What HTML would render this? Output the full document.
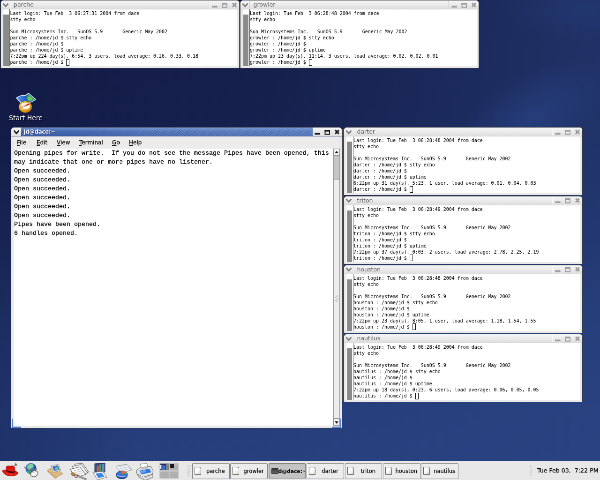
<!DOCTYPE html><html><head><meta charset="utf-8"><title>desktop</title><style>

html,body{margin:0;padding:0;}
body{width:600px;height:480px;overflow:hidden;background:#1d2c60;position:relative;}
#stage{will-change:transform;position:absolute;left:0;top:0;width:1280px;height:1024px;transform:scale(0.46875);transform-origin:0 0;overflow:hidden;
 font-family:"DejaVu Sans","Liberation Sans",sans-serif;}
#bg{position:absolute;left:0;top:0;width:1280px;height:1024px;}
.win{position:absolute;box-sizing:border-box;border:1px solid #3a3b42;border-radius:7px 7px 2px 2px;background:#e9e9e9;overflow:hidden;}
.tb{position:absolute;left:0;right:0;top:0;height:18px;background:linear-gradient(#f6f6f6,#ededed 45%,#dedede);border-bottom:1px solid #c4c4c4;}
.tb .ttl{position:absolute;left:27.5px;top:1px;font-size:12.5px;line-height:16px;color:#636363;white-space:pre;}
.tb .sepl{position:absolute;left:19px;top:1px;width:1px;height:16px;background:#cfcfcf;border-right:1px solid #fbfbfb;}
.tb .sepr{position:absolute;right:63px;top:1px;width:1px;height:16px;background:#cfcfcf;border-right:1px solid #fbfbfb;}
.tb svg{position:absolute;top:0.8px;}
.xt{position:absolute;left:4.5px;top:19px;width:499px;height:121px;background:#fff;}
.xt .sb{position:absolute;left:0;top:0;width:14px;height:121px;background:#fff;border-right:1px solid #4a4a4a;}
.xt .sb i{position:absolute;left:1px;top:11px;width:11.5px;bottom:0;background:#8b8b8b;}
.xt pre{position:absolute;left:15.5px;top:2.3px;margin:0;font-family:"DejaVu Sans Mono","Liberation Mono",monospace;font-size:9.967px;line-height:13px;color:#000;letter-spacing:0;-webkit-text-stroke:0.05px #000;}
.xt pre b{font-weight:normal;display:inline-block;width:7px;height:14px;border:1.2px solid #000;box-sizing:border-box;vertical-align:top;margin:-0.5px 0 -3px 0;}
.mw{border-radius:7px 7px 2px 2px;}
.mw .tb{background:linear-gradient(90deg,rgba(60,92,165,0) 0,rgba(60,92,165,0) 25%,rgba(120,160,225,.22) 100%),linear-gradient(#6f92cf,#4468b0 45%,#3b5ea6);border-bottom:1px solid #2d4a86;}
.mw .tb .ttl{color:#fff;font-weight:bold;left:26.5px;font-size:11.6px;letter-spacing:-0.2px;text-shadow:1px 1px 0 #24386e;}
.mw .strp{position:absolute;left:120px;right:62px;top:0;height:18px;background:repeating-linear-gradient(135deg,rgba(255,255,255,0) 0 2px,rgba(255,255,255,.16) 2px 4px);-webkit-mask-image:linear-gradient(90deg,transparent,#000 35%);mask-image:linear-gradient(90deg,transparent,#000 35%);}
.mw .grip{position:absolute;background:#5a82cc;}
.mw .mbtn{position:absolute;left:0;top:0;width:21px;height:18px;background:linear-gradient(#f6f6f6,#e0e0e0);}
.mw .rbtn{position:absolute;right:0;top:0;width:62px;height:18px;background:linear-gradient(#f6f6f6,#e0e0e0);}
.menubar{position:absolute;left:5px;right:5px;top:19px;height:26px;background:#ececec;border-bottom:1px solid #d0d0d0;font-size:12px;color:#000;-webkit-text-stroke:0.25px #000;}
.menubar span{position:absolute;top:5px;line-height:16px;white-space:pre;}
.menubar u{text-decoration:underline;text-decoration-thickness:1.3px;text-underline-offset:1.5px;}
.term{position:absolute;left:5px;top:45px;width:681px;height:591px;background:#fff;}
.term pre{position:absolute;left:1px;top:0.2px;margin:0;font-family:"Liberation Mono",monospace;font-size:13.333px;line-height:19px;color:#000;-webkit-text-stroke:0.3px #000;}
.vsb{position:absolute;left:687px;top:45px;width:14px;height:591px;background:#c6c6c6;box-sizing:border-box;border:1px solid #9a9a9a;}
.vsb .up,.vsb .dn{position:absolute;left:-1px;width:14px;height:15px;background:#f2f2f2;border:1px solid #8c8c8c;box-sizing:border-box;}
.vsb .up{top:-1px;}
.vsb .dn{bottom:-1px;}
.vsb .sl{position:absolute;left:-1px;width:14px;top:63.5px;bottom:14px;background:#ededed;border:1px solid #9a9a9a;box-sizing:border-box;}
.vsb svg{position:absolute;left:2px;top:3px;}
#panel{position:absolute;left:0;top:983px;width:1280px;height:41px;background:#e8e8e8;border-top:1px solid #f8f8f8;box-sizing:border-box;}
.task{position:absolute;top:3.5px;height:34px;width:79.5px;box-sizing:border-box;border:1px solid #7a7a7a;border-radius:2px;background:#ececec;box-shadow:inset 1px 1px 0 #fff;font-size:11.5px;color:#000;-webkit-text-stroke:0.25px #000;}
.task.act{background:#c4c4c4;box-shadow:inset 1px 1px 1px #9a9a9a;}
.task span{position:absolute;left:22px;right:2px;top:9px;text-align:center;line-height:15px;white-space:pre;}
.task i{position:absolute;left:4px;top:7px;width:14px;height:17px;box-sizing:border-box;border:1px solid #5a5a5a;background:linear-gradient(135deg,#fff 40%,#d8d8d0);border-radius:1px 4px 1px 1px;}
.task.act i{left:5px;top:10px;width:15px;height:12px;background:linear-gradient(#3a3a3a,#6a6a6a);border-color:#2a2a2a;border-radius:1px;z-index:2;}
.task.act span{left:16px;right:0;text-align:left;font-weight:bold;font-size:11px;overflow:hidden;-webkit-text-stroke:0;letter-spacing:-0.15px;}
#clock{position:absolute;left:1146px;top:12px;font-size:12.6px;line-height:15px;color:#000;white-space:pre;-webkit-text-stroke:0.25px #000;}
.hdl{position:absolute;top:8px;width:5px;height:26px;background:repeating-linear-gradient(135deg,#c8c8c8 0 1.5px,transparent 1.5px 4px);}
.ws{position:absolute;background:#b3b3b3;}
#starthere{position:absolute;left:0;top:243px;width:110px;text-align:center;color:#fff;font-size:14px;line-height:16px;text-shadow:1px 1px 1px #000;}

</style></head><body><div id="stage">
<svg id="bg" width="1280" height="1024" viewBox="0 0 1280 1024" preserveAspectRatio="none">
<defs>
<linearGradient id="g1" x1="0" y1="0" x2="0" y2="1">
<stop offset="0" stop-color="#131b44"/><stop offset="0.27" stop-color="#151e4a"/><stop offset="0.5" stop-color="#1b2a5c"/><stop offset="0.68" stop-color="#223770"/><stop offset="0.85" stop-color="#263d7a"/><stop offset="1" stop-color="#27407e"/>
</linearGradient>
<linearGradient id="g2" x1="0" y1="0" x2="1" y2="0">
<stop offset="0" stop-color="#2c4888" stop-opacity="0"/><stop offset="0.45" stop-color="#2c4888" stop-opacity="0.08"/><stop offset="1" stop-color="#2c4888" stop-opacity="0.5"/>
</linearGradient>
<radialGradient id="g3"><stop offset="0" stop-color="#2a4486" stop-opacity="0.7"/><stop offset="1" stop-color="#2a4486" stop-opacity="0"/></radialGradient>
<linearGradient id="g4" x1="0" y1="0" x2="1" y2="0"><stop offset="0" stop-color="#101840" stop-opacity="0.3"/><stop offset="1" stop-color="#101840" stop-opacity="0"/></linearGradient>
</defs>
<rect width="1280" height="1024" fill="url(#g1)"/>
<rect width="1280" height="1024" fill="url(#g2)"/>
<rect width="300" height="1024" fill="url(#g4)"/>
<ellipse cx="1135" cy="255" rx="190" ry="95" fill="url(#g3)" transform="rotate(-32 1135 255)"/>
<ellipse cx="1240" cy="20" rx="170" ry="70" fill="url(#g3)" opacity="0.45"/>
</svg>
<svg style="position:absolute;left:30px;top:193px" width="48" height="50" viewBox="0 0 48 50" ><defs><linearGradient id="shm" x1="0" y1="0" x2="1" y2="0"><stop offset="0" stop-color="#5aa0f0"/><stop offset="0.55" stop-color="#1c56c0"/><stop offset="1" stop-color="#2a62c4"/></linearGradient><radialGradient id="shc" cx="0.4" cy="0.35" r="0.7"><stop offset="0" stop-color="#ffe890"/><stop offset="0.6" stop-color="#f0b020"/><stop offset="1" stop-color="#b87408"/></radialGradient></defs><path d="M5 16 Q14 9 24 11 Q29 7 31 6 L46 19 Q40 24 32 26 Q22 24 18 30 Z" fill="url(#shm)" stroke="#e8eef8" stroke-width="1.6" stroke-linejoin="round"/><path d="M26 17 Q29 10 31.5 8 L44 19 Q38 23 32 24 Z" fill="#3fae4c"/><path d="M28 17 L34 12 L40 19 L33 23 Z" fill="#7fd070" opacity="0.7"/><ellipse cx="24" cy="35" rx="14" ry="12.5" fill="url(#shc)" stroke="#8a5a06" stroke-width="0.8"/><ellipse cx="24" cy="33" rx="10.5" ry="8" fill="#fbf6e6" stroke="#c08a18" stroke-width="0.8"/><path d="M16 36 L32 29" stroke="#d02818" stroke-width="2.6" stroke-linecap="round"/><path d="M16 36 L24 32.5" stroke="#f0f0f0" stroke-width="1.6" stroke-linecap="round"/></svg>
<div id="starthere">Start Here</div>
<div class="win" style="left:0.5px;top:0px;width:510px;height:146px"><div class="tb"><svg style="left:3px" width="14" height="18" viewBox="0 0 14 18"><path d="M1.5 5.5 L7 11.5 L12.5 5.5" fill="none" stroke="#7c7c7c" stroke-width="3"/></svg><div class="sepl"></div><div class="ttl">parche</div><div class="sepr"></div><svg style="right:0px" width="62" height="18" viewBox="0 0 62 18"><rect x="4.5" y="10.5" width="11" height="3.6" fill="#9c9c9c"/><rect x="26.5" y="5" width="9.5" height="8.6" fill="none" stroke="#9c9c9c" stroke-width="2"/><rect x="25.5" y="4" width="11.5" height="3.6" fill="#9c9c9c"/><path d="M48 4.5 L56 12.5 M56 4.5 L48 12.5" stroke="#9c9c9c" stroke-width="3.2"/></svg></div><div class="xt"><div class="sb"><i></i></div><pre>Last login: Tue Feb  3 06:27:31 2004 from dace
stty echo

Sun Microsystems Inc.   SunOS 5.9       Generic May 2002
parche : /home/jd $ stty echo
parche : /home/jd $
parche : /home/jd $ uptime
7:22pm up 224 day(s), 6:54, 3 users, load average: 0.26, 0.33, 0.18
parche : /home/jd $ <b></b></pre></div></div>
<div class="win" style="left:512px;top:0px;width:510px;height:146px"><div class="tb"><svg style="left:3px" width="14" height="18" viewBox="0 0 14 18"><path d="M1.5 5.5 L7 11.5 L12.5 5.5" fill="none" stroke="#7c7c7c" stroke-width="3"/></svg><div class="sepl"></div><div class="ttl">growler</div><div class="sepr"></div><svg style="right:0px" width="62" height="18" viewBox="0 0 62 18"><rect x="4.5" y="10.5" width="11" height="3.6" fill="#9c9c9c"/><rect x="26.5" y="5" width="9.5" height="8.6" fill="none" stroke="#9c9c9c" stroke-width="2"/><rect x="25.5" y="4" width="11.5" height="3.6" fill="#9c9c9c"/><path d="M48 4.5 L56 12.5 M56 4.5 L48 12.5" stroke="#9c9c9c" stroke-width="3.2"/></svg></div><div class="xt"><div class="sb"><i></i></div><pre>Last login: Tue Feb  3 06:28:48 2004 from dace
stty echo

Sun Microsystems Inc.   SunOS 5.9       Generic May 2002
growler : /home/jd $ stty echo
growler : /home/jd $
growler : /home/jd $ uptime
7:22pm up 23 day(s), 11:14, 3 users, load average: 0.02, 0.02, 0.01
growler : /home/jd $ <b></b></pre></div></div>
<div class="win" style="left:733px;top:271px;width:510px;height:146px"><div class="tb"><svg style="left:3px" width="14" height="18" viewBox="0 0 14 18"><path d="M1.5 5.5 L7 11.5 L12.5 5.5" fill="none" stroke="#7c7c7c" stroke-width="3"/></svg><div class="sepl"></div><div class="ttl">darter</div><div class="sepr"></div><svg style="right:0px" width="62" height="18" viewBox="0 0 62 18"><rect x="4.5" y="10.5" width="11" height="3.6" fill="#9c9c9c"/><rect x="26.5" y="5" width="9.5" height="8.6" fill="none" stroke="#9c9c9c" stroke-width="2"/><rect x="25.5" y="4" width="11.5" height="3.6" fill="#9c9c9c"/><path d="M48 4.5 L56 12.5 M56 4.5 L48 12.5" stroke="#9c9c9c" stroke-width="3.2"/></svg></div><div class="xt"><div class="sb"><i></i></div><pre>Last login: Tue Feb  3 06:28:48 2004 from dace
stty echo

Sun Microsystems Inc.   SunOS 5.9       Generic May 2002
darter : /home/jd $ stty echo
darter : /home/jd $
darter : /home/jd $ uptime
6:22pm up 31 day(s), 5:23, 1 user, load average: 0.01, 0.04, 0.03
darter : /home/jd $ <b></b></pre></div></div>
<div class="win" style="left:733px;top:417.5px;width:510px;height:146px"><div class="tb"><svg style="left:3px" width="14" height="18" viewBox="0 0 14 18"><path d="M1.5 5.5 L7 11.5 L12.5 5.5" fill="none" stroke="#7c7c7c" stroke-width="3"/></svg><div class="sepl"></div><div class="ttl">triton</div><div class="sepr"></div><svg style="right:0px" width="62" height="18" viewBox="0 0 62 18"><rect x="4.5" y="10.5" width="11" height="3.6" fill="#9c9c9c"/><rect x="26.5" y="5" width="9.5" height="8.6" fill="none" stroke="#9c9c9c" stroke-width="2"/><rect x="25.5" y="4" width="11.5" height="3.6" fill="#9c9c9c"/><path d="M48 4.5 L56 12.5 M56 4.5 L48 12.5" stroke="#9c9c9c" stroke-width="3.2"/></svg></div><div class="xt"><div class="sb"><i></i></div><pre>Last login: Tue Feb  3 06:28:49 2004 from dace
stty echo

Sun Microsystems Inc.   SunOS 5.9       Generic May 2002
triton : /home/jd $ stty echo
triton : /home/jd $
triton : /home/jd $ uptime
7:22pm up 37 day(s), 0:03, 2 users, load average: 2.78, 2.25, 2.19
triton : /home/jd $ <b></b></pre></div></div>
<div class="win" style="left:733px;top:564.5px;width:510px;height:146px"><div class="tb"><svg style="left:3px" width="14" height="18" viewBox="0 0 14 18"><path d="M1.5 5.5 L7 11.5 L12.5 5.5" fill="none" stroke="#7c7c7c" stroke-width="3"/></svg><div class="sepl"></div><div class="ttl">houston</div><div class="sepr"></div><svg style="right:0px" width="62" height="18" viewBox="0 0 62 18"><rect x="4.5" y="10.5" width="11" height="3.6" fill="#9c9c9c"/><rect x="26.5" y="5" width="9.5" height="8.6" fill="none" stroke="#9c9c9c" stroke-width="2"/><rect x="25.5" y="4" width="11.5" height="3.6" fill="#9c9c9c"/><path d="M48 4.5 L56 12.5 M56 4.5 L48 12.5" stroke="#9c9c9c" stroke-width="3.2"/></svg></div><div class="xt"><div class="sb"><i></i></div><pre>Last login: Tue Feb  3 06:28:48 2004 from dace
stty echo

Sun Microsystems Inc.   SunOS 5.9       Generic May 2002
houston : /home/jd $ stty echo
houston : /home/jd $
houston : /home/jd $ uptime
7:22pm up 23 day(s), 8:05, 1 user, load average: 1.18, 1.54, 1.55
houston : /home/jd $ <b></b></pre></div></div>
<div class="win" style="left:733px;top:712px;width:510px;height:146px"><div class="tb"><svg style="left:3px" width="14" height="18" viewBox="0 0 14 18"><path d="M1.5 5.5 L7 11.5 L12.5 5.5" fill="none" stroke="#7c7c7c" stroke-width="3"/></svg><div class="sepl"></div><div class="ttl">nautilus</div><div class="sepr"></div><svg style="right:0px" width="62" height="18" viewBox="0 0 62 18"><rect x="4.5" y="10.5" width="11" height="3.6" fill="#9c9c9c"/><rect x="26.5" y="5" width="9.5" height="8.6" fill="none" stroke="#9c9c9c" stroke-width="2"/><rect x="25.5" y="4" width="11.5" height="3.6" fill="#9c9c9c"/><path d="M48 4.5 L56 12.5 M56 4.5 L48 12.5" stroke="#9c9c9c" stroke-width="3.2"/></svg></div><div class="xt"><div class="sb"><i></i></div><pre>Last login: Tue Feb  3 06:28:49 2004 from dace
stty echo

Sun Microsystems Inc.   SunOS 5.9       Generic May 2002
nautilus : /home/jd $ stty echo
nautilus : /home/jd $
nautilus : /home/jd $ uptime
7:22pm up 18 day(s), 0:23, 6 users, load average: 0.06, 0.05, 0.05
nautilus : /home/jd $ <b></b></pre></div></div>
<div style="position:absolute;left:729.5px;top:275px;width:4px;height:580px;background:#474747"></div><div style="position:absolute;left:510px;top:5px;width:2.5px;height:139px;background:#4c4c4c"></div>
<div class="win mw" style="left:23px;top:271px;width:707px;height:643px"><div class="tb"><div class="strp"></div><div class="mbtn"></div><svg style="left:4px" width="14" height="18" viewBox="0 0 14 18"><path d="M1.5 5.5 L7 11.5 L12.5 5.5" fill="none" stroke="#1a1a1a" stroke-width="3"/></svg><div class="ttl">jd@dace:~</div><div class="rbtn"></div><svg style="right:0px" width="62" height="18" viewBox="0 0 62 18"><rect x="4.5" y="10.5" width="11" height="3.6" fill="#1a1a1a"/><rect x="26.5" y="5" width="9.5" height="8.6" fill="none" stroke="#1a1a1a" stroke-width="2"/><rect x="25.5" y="4" width="11.5" height="3.6" fill="#1a1a1a"/><path d="M48 4.5 L56 12.5 M56 4.5 L48 12.5" stroke="#1a1a1a" stroke-width="3.2"/></svg></div><div class="menubar"><span style="left:7px"><u>F</u>ile</span><span style="left:49px"><u>E</u>dit</span><span style="left:92px"><u>V</u>iew</span><span style="left:140px"><u>T</u>erminal</span><span style="left:210px"><u>G</u>o</span><span style="left:246px"><u>H</u>elp</span></div><div class="term"><pre>Opening pipes for write.  If you do not see the message Pipes have been opened, this
may indicate that one or more pipes have no listener.
Open succeeded.
Open succeeded.
Open succeeded.
Open succeeded.
Open succeeded.
Open succeeded.
Pipes have been opened.
6 handles opened.</pre></div><div class="vsb"><div class="sl"><div style="position:absolute;left:3px;top:50%;margin-top:-8px;width:7px;height:16px;background:repeating-linear-gradient(135deg,#bdbdbd 0 1.4px,transparent 1.4px 4px)"></div></div><div class="up"><svg width="8" height="8"><path d="M0 6 L4 1 L8 6Z" fill="#111"/></svg></div><div class="dn"><svg width="8" height="8"><path d="M0 2 L4 7 L8 2Z" fill="#111"/></svg></div></div><div class="grip" style="left:1px;bottom:0;width:3px;height:20px"></div><div class="grip" style="left:1px;bottom:0;width:20px;height:3px"></div><div class="grip" style="right:1px;bottom:0;width:3px;height:20px"></div><div class="grip" style="right:1px;bottom:0;width:20px;height:3px"></div></div>
<div id="panel"><svg style="position:absolute;left:0px;top:0px" width="48" height="42" viewBox="0 0 48 42" overflow="visible"><path d="M29.9 9.3 L37.3 9.3 L33.6 3.6 Z" fill="#5e5e5e"/><path d="M4.9 20.4 Q7 17.5 13.5 18.5 L13 12.5 Q14 9.6 18 9.8 Q22 11 25 9.8 Q30 9.2 31 12.5 L32 21 Q37 22 38.5 24.5 Q38 28 32 30.5 Q24 33 16 30.5 Q7 27 4.9 20.4 Z" fill="#e8150f" stroke="#8a1408" stroke-width="0.9"/><path d="M13.5 18.7 Q22 23.5 32 21.2 L32.3 23.6 Q22 27 13.8 21.6 Z" fill="#1a0a0a"/><path d="M16 13.5 Q19 15 21 13 Q23 15 26 13" stroke="#b01008" stroke-width="1.2" fill="none"/><path d="M8 23 Q16 29 28 28.5" stroke="#ff4a3a" stroke-width="1.2" fill="none" opacity="0.7"/></svg><svg style="position:absolute;left:49px;top:-1.5px" width="48" height="42" viewBox="0 0 48 42" overflow="visible"><defs><radialGradient id="glb" cx="0.4" cy="0.35" r="0.75"><stop offset="0" stop-color="#5a9cf0"/><stop offset="0.7" stop-color="#1848b0"/><stop offset="1" stop-color="#0c2a78"/></radialGradient></defs><circle cx="17" cy="16.5" r="11.5" fill="url(#glb)"/><path d="M9 12 Q12 6 19 6.5 Q24 8 22 13 Q18 18 12 17 Q8 16 9 12 Z" fill="#7fd49a"/><path d="M8 21 Q14 19 18 23 Q16 28 11 27 Z" fill="#3aa860"/><path d="M3 13 Q10 22 30 18" stroke="#7c7c7c" stroke-width="2.2" fill="none"/><ellipse cx="24" cy="27.5" rx="8" ry="6.3" fill="#f6f6f6" stroke="#5a5a5a" stroke-width="1.3" transform="rotate(-25 24 27.5)"/><path d="M19.5 24 Q24 25.5 28.5 22.5" stroke="#909090" stroke-width="1" fill="none"/></svg><svg style="position:absolute;left:97px;top:0.5px" width="48" height="42" viewBox="0 0 48 42" overflow="visible"><path d="M4 18.5 L16 11 L37 25.5 L21 35 Z" fill="#e0bc84" stroke="#a88850" stroke-width="1"/><path d="M4 18.5 L21 35 L21.5 37 L4.5 21 Z" fill="#b89458"/><path d="M9 21 L22 30 M14 17.5 L28 27" stroke="#c8a468" stroke-width="1.2"/><path d="M11.8 8.5 L27.8 4.9 L33.1 18.2 L17.1 22.4 Z" fill="#eeeeee" stroke="#8a8a8a" stroke-width="0.9"/><path d="M14.5 10.3 L26.5 7.6 L30.4 17 L18.5 20 Z" fill="#3a70c4"/><path d="M19.5 13 L25.5 11 L28 16.5 L21.5 18.5 Z" fill="#6cc878"/></svg><svg style="position:absolute;left:145px;top:0.5px" width="48" height="42" viewBox="0 0 48 42" overflow="visible"><path d="M14 5 L31 3 L44 22 L24 28 Z" fill="#e4e4e4" stroke="#555" stroke-width="1"/><path d="M9 10 L28 6 L42 24 L20 31 Z" fill="#f4f4f4" stroke="#555" stroke-width="1"/><path d="M5 16 L25 11 L38 27 L16 34 Z" fill="#fdfdfd" stroke="#4a4a4a" stroke-width="1.1"/><path d="M13 19 L25 16 M16 23 L29 19.5 M19 27 L32 23.5" stroke="#bdbdbd" stroke-width="1.4"/><path d="M6 24 Q12 21 17 27 Q13 31.5 8 29 Z" fill="#b8843c" stroke="#7a5420" stroke-width="0.7"/><path d="M15 26 L40 36.5 L38 38.5 L14 29.5 Z" fill="#a8a8b0" stroke="#555" stroke-width="0.8"/><path d="M20 28.8 L24 30.3" stroke="#c83020" stroke-width="2"/></svg><svg style="position:absolute;left:191px;top:1px" width="48" height="42" viewBox="0 0 48 42" overflow="visible"><path d="M11 4 L33 3 L33 22 L11 22 Z" fill="#3a4c80" stroke="#1e2a50" stroke-width="1"/><rect x="15.5" y="9" width="4" height="12" fill="#e0603a"/><rect x="21" y="5.5" width="4" height="15.5" fill="#48a860"/><rect x="26.5" y="5" width="5" height="16" fill="#6a86c0"/><path d="M7 23 L28 20.5 L37 33 L17 38.5 Z" fill="#f4f4f4" stroke="#6a6a6a" stroke-width="1"/><path d="M13 25.5 L26 23.5 L31.5 31.5 L19 35 Z" fill="#3a88e8"/></svg><svg style="position:absolute;left:236px;top:1px" width="48" height="42" viewBox="0 0 48 42" overflow="visible"><path d="M11 10 L34 5 L45 17 L24 24 Z" fill="#f4f4f4" stroke="#7c7c7c" stroke-width="1"/><path d="M16 11.5 L33 8 M19 15 L37 11 M22 18.5 L40 14.5" stroke="#b8cce8" stroke-width="1.3"/><ellipse cx="24" cy="29.5" rx="12" ry="7.5" fill="#1c3c88"/><ellipse cx="24" cy="27" rx="12" ry="7.5" fill="#3a74d4" stroke="#183878" stroke-width="0.8"/><path d="M24 27 L22 19.6 A12 7.5 0 0 1 33.5 22.5 Z" fill="#f0602a"/><path d="M24 27 L33.5 22.5 A12 7.5 0 0 1 35.5 25 Z" fill="#48b050"/><path d="M14 29 Q22 34 32 31" stroke="#9cc0f4" stroke-width="1.6" fill="none"/></svg><svg style="position:absolute;left:286px;top:1px" width="48" height="42" viewBox="0 0 48 42" overflow="visible"><path d="M13 5 L27 3.5 L31 14 L17 16.5 Z" fill="#ffffff" stroke="#7c7c7c" stroke-width="1"/><path d="M5 18 L14 12 L36 10 L41 20 L39 27 L20 33 L6 26 Z" fill="#e2e2e2" stroke="#6a6a6a" stroke-width="1"/><path d="M14 12 L17 16.5 L31 14 L29.5 10.6 Z" fill="#bdbdbd"/><path d="M11 19 L33 15 L36.5 22.5 L16 27 Z" fill="#2c78e0"/><path d="M13 20 L24 18 L26 22 L15.5 24.3 Z" fill="#7cb4f8" opacity="0.8"/><path d="M6 26 L20 33 L39 27 L41 33 L24 40 L10 33 Z" fill="#c4c4c4" stroke="#6a6a6a" stroke-width="0.9"/><path d="M14 31 L24 36 L38 31" stroke="#f4f4f4" stroke-width="1.6" fill="none"/></svg><div class="ws" style="left:340px;top:3px;width:41px;height:34px;background:#c6c6c6"></div><div class="ws" style="left:342px;top:5px;width:18px;height:14px;background:#1f2f62"></div><div class="ws" style="left:362px;top:5px;width:18px;height:14px;background:#b0b0b0"></div><div class="ws" style="left:342px;top:22px;width:18px;height:14px;background:#b0b0b0"></div><div class="ws" style="left:362px;top:22px;width:18px;height:14px;background:#b0b0b0"></div><div class="ws" style="left:342px;top:8px;width:3px;height:9px;background:#f4f4f4"></div><div class="ws" style="left:344px;top:9px;width:9px;height:9px;background:#3c6ccc"></div><div class="ws" style="left:354px;top:6px;width:6px;height:12px;background:#808080"></div><div class="ws" style="left:363px;top:6px;width:8px;height:8px;background:#1a1a1a"></div><div class="ws" style="left:374px;top:7px;width:4px;height:2px;background:#cfcfcf"></div><div class="hdl" style="left:400px"></div><div class="task" style="left:410.0px"><i></i><span>parche</span></div><div class="task" style="left:491.4px"><i></i><span>growler</span></div><div class="task act" style="left:572.8px"><i></i><span>jd@dace:~</span></div><div class="task" style="left:654.2px"><i></i><span>darter</span></div><div class="task" style="left:735.6px"><i></i><span>triton</span></div><div class="task" style="left:817.0px"><i></i><span>houston</span></div><div class="task" style="left:898.4px"><i></i><span>nautilus</span></div><div class="hdl" style="left:1130px"></div><div id="clock">Tue Feb 03,  7:22 PM</div></div>
</div></body></html>
